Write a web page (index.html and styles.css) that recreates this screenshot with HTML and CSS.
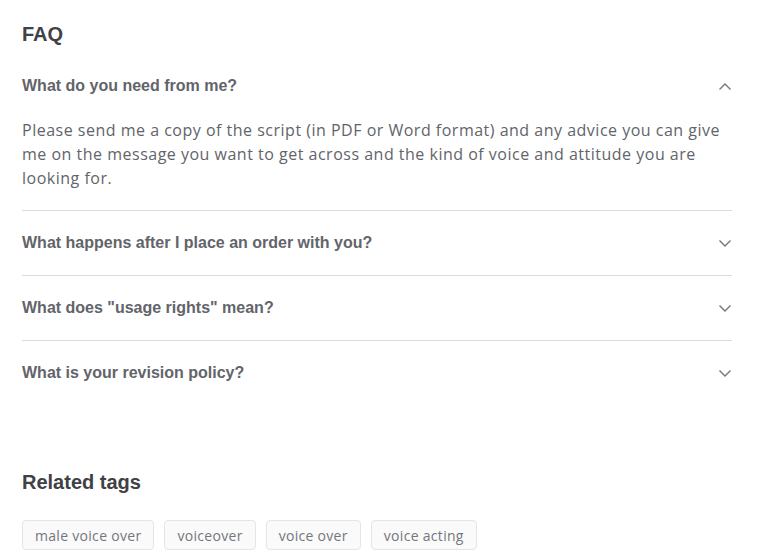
FILE: index.html
```html
<!DOCTYPE html>
<html>
<head>
<meta charset="utf-8">
<link rel="stylesheet" href="styles.css">
</head>
<body>
<div class="page">
  <section class="faq">
    <h2 class="section-title">FAQ</h2>
    <div class="item open">
      <div class="question">
        <span>What do you need from me?</span>
        <svg class="chev" viewBox="0 0 12 7" width="12" height="7"><path d="M0.5 6.5 L6 1 L11.5 6.5" fill="none" stroke="#74767e" stroke-width="1.4"/></svg>
      </div>
      <p class="answer">Please send me a copy of the script (in PDF or Word format) and any advice you can give me on the message you want to get across and the kind of voice and attitude you are looking for.</p>
    </div>
    <div class="item">
      <div class="question">
        <span>What happens after I place an order with you?</span>
        <svg class="chev" viewBox="0 0 12 7" width="12" height="7"><path d="M0.5 0.5 L6 6 L11.5 0.5" fill="none" stroke="#74767e" stroke-width="1.4"/></svg>
      </div>
    </div>
    <div class="item">
      <div class="question">
        <span>What does "usage rights" mean?</span>
        <svg class="chev" viewBox="0 0 12 7" width="12" height="7"><path d="M0.5 0.5 L6 6 L11.5 0.5" fill="none" stroke="#74767e" stroke-width="1.4"/></svg>
      </div>
    </div>
    <div class="item last">
      <div class="question">
        <span>What is your revision policy?</span>
        <svg class="chev" viewBox="0 0 12 7" width="12" height="7"><path d="M0.5 0.5 L6 6 L11.5 0.5" fill="none" stroke="#74767e" stroke-width="1.4"/></svg>
      </div>
    </div>
  </section>
  <section class="tags-section">
    <h2 class="section-title">Related tags</h2>
    <ul class="tags">
      <li class="tag">male voice over</li>
      <li class="tag">voiceover</li>
      <li class="tag">voice over</li>
      <li class="tag">voice acting</li>
    </ul>
  </section>
</div>
</body>
</html>
```

FILE: styles.css
```css
* { box-sizing: border-box; }
html, body { margin: 0; padding: 0; background: #fff; }
body { font-family: "Liberation Sans", Arial, sans-serif; color: #62646a; }
.page { width: 710px; margin-left: 22px; padding-top: 21px; }
.section-title {
  margin: 0;
  font-size: 20px;
  line-height: 26px;
  font-weight: 700;
  color: #404145;
}
.faq .section-title { margin-bottom: 27px; }
.item { border-bottom: 1px solid #dadbdd; }
.item.last { border-bottom: none; }
.question {
  display: flex;
  justify-content: space-between;
  align-items: center;
  height: 64px;
  font-size: 16px;
  font-weight: 700;
  color: #62646a;
}
.item.open .question { height: 24px; margin-bottom: 20px; }
.chev { margin-right: 1px; }
.answer {
  margin: 0 0 20px;
  font-family: "Open Sans", "Liberation Sans", sans-serif;
  font-size: 16px;
  line-height: 24px;
  letter-spacing: 0.5px;
  color: #62646a;
}
.tags-section { margin-top: 64px; }
.tags-section .section-title { margin-bottom: 25px; }
.tags { list-style: none; margin: 0; padding: 0; display: flex; gap: 10px; }
.tag {
  height: 30px;
  padding: 0 12px;
  display: flex;
  align-items: center;
  font-family: "Open Sans", "Liberation Sans", sans-serif;
  font-size: 14px;
  letter-spacing: 0.3px;
  color: #74767e;
  background: #fafafa;
  border: 1px solid #e4e5e7;
  border-radius: 4px;
}
```
